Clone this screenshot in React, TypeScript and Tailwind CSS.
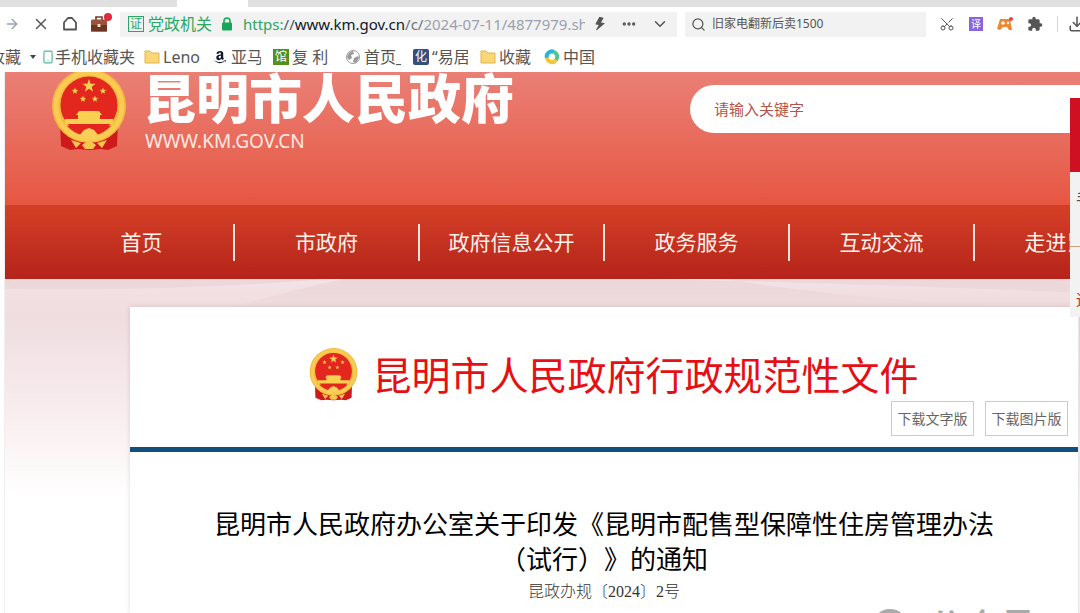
import React from "react";
import {
  ArrowRight,
  ChevronDown,
  Download,
  Ellipsis,
  Scissors,
  Search,
  Smartphone,
  X,
} from "lucide-react";
import { BsLightningFill } from "react-icons/bs";
import { FaAmazon } from "react-icons/fa";
import { MdExtension } from "react-icons/md";

const star = (cx: number, cy: number, r: number) =>
  Array.from({ length: 10 }, (_, i) => {
    const len = i % 2 ? r * 0.4 : r;
    const a = (Math.PI / 5) * i - Math.PI / 2;
    return `${cx + len * Math.cos(a)},${cy + len * Math.sin(a)}`;
  }).join(" ");

const Emblem: React.FC<{ className: string }> = ({ className }) => (
  <svg className={className} viewBox="0 0 76 82" aria-hidden="true">
    <path d="M9 52L67 52L66 77L57 81L50 80L38 81L26 80L19 81L10 77Z" fill="#cf1a1c" />
    <circle cx="38" cy="37" r="37" fill="#f3b83d" />
    <circle cx="38" cy="37" r="33" fill="none" stroke="#f9cb52" strokeWidth="5" />
    <circle cx="38" cy="36" r="28.5" fill="#e3261e" />
    <g fill="#f9d052">
      <polygon points={star(38, 17, 7)} />
      <polygon points={star(24, 22, 3.5)} />
      <polygon points={star(52, 22, 3.5)} />
      <polygon points={star(32, 30, 3.5)} />
      <polygon points={star(44, 30, 3.5)} />
      <path d="M28 42L48 42L51 46L49 46L49 50L62 50L62 55L14 55L14 50L27 50L27 46L25 46Z" />
    </g>
    <path d="M16 57H60Q53 64 45 66L38 61L31 66Q23 64 16 57Z" fill="#e3261e" />
    <path d="M28 67L33 61L38 59L43 61L48 67L43 70L38 68L33 70Z" fill="#f9cf5a" />
    <path d="M20 71L30 74L25 79ZM56 71L46 74L51 79ZM31 76L38 71L45 76L42 80L34 80Z" fill="#f9c44c" />
  </svg>
);

const Folder: React.FC = () => (
  <svg className="w-4 h-4 shrink-0" viewBox="0 0 16 16" aria-hidden="true">
    <path d="M1 2H6L8 4H15V14H1Z" fill="#f8d775" stroke="#e5b54b" />
  </svg>
);

const Globe: React.FC = () => (
  <svg className="w-4 h-4 shrink-0" viewBox="0 0 16 16" aria-hidden="true">
    <circle cx="8" cy="8" r="6.5" fill="#fff" stroke="#999" />
    <path d="M2 8Q3 3 8 2L9 5L6 6L7 9L4 11ZM9 9L13 7L14 9L11 14L8 13Z" fill="#999" />
  </svg>
);

const Swirl: React.FC = () => (
  <svg className="w-4 h-4 shrink-0" viewBox="0 0 16 16" fill="none" strokeWidth="4" aria-hidden="true">
    <path d="M3 9A5 5 0 0 1 10 3" stroke="#28b8d5" />
    <path d="M10 3A5 5 0 0 1 12 11" stroke="#52c38b" />
    <path d="M12 11A5 5 0 0 1 3 9" stroke="#f4c63d" />
  </svg>
);

const bookmarks = [
  { label: "Leno", icon: <Folder />, width: "w-[68px]" },
  {
    label: "亚马",
    icon: <FaAmazon className="w-4 h-4 shrink-0 p-px text-gray-900" />,
    width: "w-[61px]",
  },
  {
    label: "复 利",
    icon: <span className="w-4 h-4 shrink-0 bg-[#55901c] text-white text-xs leading-4 text-center">馆</span>,
    width: "w-[72px]",
  },
  { label: "首页_", icon: <Globe />, width: "w-[68px]" },
  {
    label: "“易居",
    icon: <span className="w-4 h-4 shrink-0 rounded-xs bg-[#344f7d] text-white text-xs leading-4 text-center">化</span>,
    width: "w-[67px]",
  },
  { label: "收藏", icon: <Folder />, width: "w-[64px]" },
  { label: "中国", icon: <Swirl />, width: "w-[64px]" },
];

const navItems = ["首页", "市政府", "政府信息公开", "政务服务", "互动交流", "走进昆明"];

const BrowserBar: React.FC = () => (
  <div className="text-[#555] shrink-0">
    {/* tab strip */}
    <div className="flex h-[7px] bg-[#e0e0e0]">
      <div className="w-[177px]" />
      <div className="w-[71px] bg-white" />
    </div>

    {/* toolbar */}
    <div className="flex items-center h-[34px]">
      <button aria-label="前进" className="ml-1 text-gray-400">
        <ArrowRight className="w-4 h-4" />
      </button>
      <button aria-label="停止" className="ml-3">
        <X className="w-[18px] h-[18px]" />
      </button>
      <button aria-label="主页" className="ml-3">
        <svg className="w-4 h-4" viewBox="0 0 16 16" fill="none" stroke="currentColor" strokeWidth="1.8">
          <path d="M2 6.5L6 2H10L14 6.5V13.5H2Z" strokeLinejoin="round" />
        </svg>
      </button>
      <button aria-label="工具箱" className="ml-3">
        <svg className="w-[22px] h-[22px]" viewBox="0 0 22 22">
          <path d="M6 7V4H12V7" fill="none" stroke="#6d3d2b" strokeWidth="1.6" />
          <rect x="1" y="6.5" width="16" height="12" rx="1.5" fill="#9b5439" />
          <path d="M1 12H17V18.5H1Z" fill="#6b3725" />
          <rect x="7.5" y="11" width="3" height="3" fill="#f0d9c5" />
          <circle cx="18" cy="4" r="4" fill="#de2b3d" />
        </svg>
      </button>

      <div className="ml-2 flex items-center w-[557px] shrink-0 h-[25px] bg-[#f2f2f2] pl-2">
        <span className="w-4 h-4 shrink-0 border border-[#2aa766] text-[#2aa766] text-xs leading-[14px] text-center">
          证
        </span>
        <span className="ml-1 shrink-0 text-base text-[#2aa766]">党政机关</span>
        <svg className="ml-[9px] w-3 h-4 shrink-0" viewBox="0 0 12 16" aria-hidden="true">
          <path d="M3 7V5A3 3 0 0 1 9 5V7" fill="none" stroke="#17a65a" strokeWidth="1.6" />
          <rect x="1" y="6.5" width="10" height="8" rx="1" fill="#17a65a" />
        </svg>
        <p className="ml-[10px] w-[342px] shrink-0 overflow-hidden whitespace-nowrap text-[15px] text-gray-400">
          <span className="text-[#2aa766]">https:</span>
          <span className="text-gray-600">//</span>
          <span className="text-gray-900">www.km.gov.cn</span>
          <span className="text-gray-500">/c/</span>
          2024-07-11/4877979.sh
        </p>
        <button aria-label="极速模式" className="ml-2">
          <BsLightningFill className="w-[14px] h-[14px] rotate-12" />
        </button>
        <button aria-label="更多" className="ml-[14px]">
          <Ellipsis className="w-4 h-4" strokeWidth={3} />
        </button>
        <button aria-label="展开" className="ml-[14px]">
          <ChevronDown className="w-[18px] h-[18px]" />
        </button>
      </div>

      <label className="ml-2 flex items-center w-[241px] shrink-0 h-[25px] bg-[#f2f2f2] pl-[6px]">
        <Search className="w-[15px] h-[15px] shrink-0" />
        <input
          aria-label="搜索"
          defaultValue="旧家电翻新后卖1500"
          className="ml-[6px] w-full bg-transparent text-xs outline-none"
        />
      </label>

      <div className="ml-[13px] flex shrink-0 items-center gap-[14px]">
        <button aria-label="截图">
          <Scissors className="w-4 h-4 -rotate-90" strokeWidth={1.5} />
        </button>
        <button aria-label="翻译" className="w-[14px] h-[14px] bg-[#8b63dc] text-white text-[10px] leading-[14px]">
          译
        </button>
        <button aria-label="游戏">
          <svg className="w-4 h-4" viewBox="0 0 16 16">
            <path d="M3 3H13L15 14L12 14L10 11H6L3 14L0 13Z" fill="#ee8733" />
            <path d="M4 7H8M6 5V9" stroke="#fff3df" strokeWidth="1.3" />
            <circle cx="11" cy="7" r="1.3" fill="#fff3df" />
            <circle cx="14" cy="3" r="2" fill="#e8433e" />
          </svg>
        </button>
        <button aria-label="扩展">
          <MdExtension className="w-4 h-4" />
        </button>
        <span className="w-px h-4 bg-gray-300" />
        <button aria-label="下载" className="-ml-1">
          <Download className="w-[18px] h-[18px]" />
        </button>
      </div>
    </div>

    {/* bookmarks */}
    <div className="flex items-center h-[31px] text-base whitespace-nowrap overflow-hidden">
      <a href="#" className="flex items-center justify-end w-[21px] overflow-hidden">
        收藏
      </a>
      <span className="ml-[9px] border-x-[3px] border-t-4 border-x-transparent border-t-[#444]" />
      <a href="#" className="ml-[5px] flex items-center w-[103px]">
        <Smartphone className="w-[14px] h-4 text-[#55b79a] shrink-0" />
        手机收藏夹
      </a>
      {bookmarks.map((item, i) => (
        <a key={i} href="#" className={`flex items-center gap-[3px] shrink-0 overflow-hidden pr-3 ${item.width}`}>
          {item.icon}
          <span className="overflow-hidden">{item.label}</span>
        </a>
      ))}
    </div>
  </div>
);

const SiteHeader: React.FC = () => (
  <header>
    {/* logo + search */}
    <div className="flex justify-between h-[133px] overflow-hidden bg-linear-to-b from-[#ea7f75] to-[#e65641] pl-[46px]">
      <div className="flex">
        <Emblem className="w-[76px] h-[82px] -mt-[3px]" />
        <div className="ml-4 text-white">
          <p className="text-[53px] leading-[53px] font-black whitespace-nowrap">昆明市人民政府</p>
          <p className="pl-[2px] text-[19px] leading-8 text-[#ffe9e2]">WWW.KM.GOV.CN</p>
        </div>
      </div>
      <input
        type="search"
        aria-label="站内搜索"
        placeholder="请输入关键字"
        className="mt-[13px] w-[390px] h-12 rounded-l-full bg-white pl-6 text-[15px] placeholder:text-[#b5534a] outline-none"
      />
    </div>

    {/* main nav */}
    <nav className="flex items-center h-[74px] overflow-hidden border-t border-[#c83e2c] bg-linear-to-b from-[#d43f26] to-[#b5231b] pl-[45px]">
      {navItems.map((item) => (
        <a
          key={item}
          href="#"
          className="w-[185px] shrink-0 border-r-2 border-[#fbe3da] text-center text-[21px] leading-[37px] text-[#fff3ec]"
        >
          {item}
        </a>
      ))}
    </nav>
  </header>
);

const Article: React.FC = () => (
  <article className="ml-[125px] mr-px grow border-r border-gray-200 bg-white shadow-[0_0_5px_rgba(120,60,70,0.2)]">
    <div className="border-b-[5px] border-[#134f7c] pt-[41px] pb-[11px]">
      <div className="flex items-center justify-center gap-[14px] pl-5">
        <Emblem className="w-[49px] h-[53px]" />
        <h2 className="text-[39px] leading-[53px] text-[#e50f14] whitespace-nowrap">昆明市人民政府行政规范性文件</h2>
      </div>
      <div className="flex justify-end gap-[11px] pr-[10px]">
        <button className="w-[83px] h-[35px] border border-[#ccc] text-sm text-[#666] whitespace-nowrap">
          下载文字版
        </button>
        <button className="w-[83px] h-[35px] border border-[#ccc] text-sm text-[#666] whitespace-nowrap">
          下载图片版
        </button>
      </div>
    </div>
    <div className="pt-[55px] text-center">
      <h1 className="text-[26px] leading-[35px] text-black [text-spacing-trim:space-all]">
        昆明市人民政府办公室关于印发《昆明市配售型保障性住房管理办法
        <br />
        （试行）》的通知
      </h1>
      <p className="font-['Liberation_Serif','Noto_Sans_CJK_SC',serif] text-base leading-[30px] font-light text-[#333]">
        昆政办规〔2024〕2号
      </p>
    </div>
  </article>
);

export default function App() {
  return (
    <div className="relative flex h-screen flex-col overflow-hidden bg-white font-['Noto_Sans','Noto_Sans_CJK_SC',sans-serif]">
      <BrowserBar />

      <main className="ml-1 flex grow flex-col border-l border-[#eee]">
        <SiteHeader />
        <div className="relative flex grow flex-col bg-linear-to-b from-[#ecd7da] via-[#f8edef] via-40% to-white to-65% pt-7">
          <svg
            className="absolute top-0 left-0 w-full h-10"
            viewBox="0 0 1075 40"
            preserveAspectRatio="none"
            aria-hidden="true"
          >
            <defs>
              <linearGradient id="streak" x1="0" y1="0" x2="0" y2="1">
                <stop offset="0" stopColor="#f7e9eb" stopOpacity="0.7" />
                <stop offset="1" stopColor="#f7e9eb" stopOpacity="0" />
              </linearGradient>
            </defs>
            <path d="M0 10Q170 13 320 0L340 0Q270 14 190 40L0 40Z" fill="url(#streak)" />
            <path d="M640 0Q850 4 1075 14L1075 28Q880 26 720 0Z" fill="url(#streak)" />
          </svg>
          <div className="relative flex grow flex-col">
            <Article />
          </div>
        </div>
      </main>

      {/* floating side panel */}
      <aside className="absolute top-[98px] -right-14 w-[66px] bg-[#f3f2f2] text-base">
        <div className="h-[74px] bg-[#cf1022]" />
        <a href="#" className="block h-[75px] border-b border-[#c9a27a] pl-[6px] leading-[54px] text-[#555]">
          手机版
        </a>
        <a href="#" className="block h-[70px] pl-[6px] leading-[106px] text-[#b83a35]">
          适老版
        </a>
      </aside>

      {/* account watermark */}
      <div className="absolute -bottom-8 right-11 flex items-center gap-9 text-[36px] leading-9 font-medium text-[#aaa]">
        <span className="w-9 h-9 rounded-full bg-[#aaa]" />
        <span className="-ml-4 whitespace-nowrap">公众号</span>
      </div>
    </div>
  );
}
